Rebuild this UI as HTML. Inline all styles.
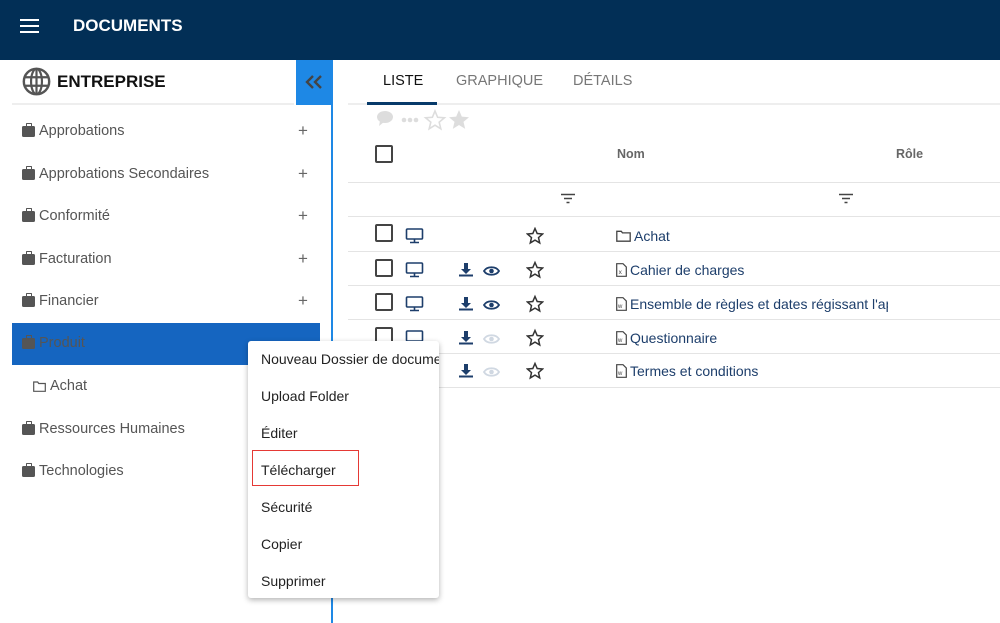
<!DOCTYPE html>
<html><head><meta charset="utf-8"><style>
*{box-sizing:border-box;margin:0;padding:0}
body{width:1000px;height:623px;overflow:hidden;background:#fff;font-family:"Liberation Sans",sans-serif;position:relative;color:#333}
.a{position:absolute}
.hdr{left:0;top:0;width:1000px;height:60px;background:#022f56}
.side .it{position:absolute;left:22px;font-size:14.5px;color:#555;display:flex;align-items:center;gap:4px}
.brief{width:13px;height:11px;background:#555;border-radius:1.5px;position:relative;margin-top:1px}
.brief:before{content:"";position:absolute;left:3.5px;top:-3px;width:4px;height:2px;border:1.5px solid #555;border-bottom:none;border-radius:1px 1px 0 0}
.plus{position:absolute;left:298px;font-size:17px;color:#666}
.cb{position:absolute;width:18px;height:18px;border:2px solid #444;border-radius:2px}
.hl{position:absolute;left:348px;width:652px;height:1px;background:#e4e4e4}
.nm{position:absolute;left:616px;font-size:14px;color:#1d3e6b;display:flex;align-items:center;gap:3px;white-space:nowrap;width:272px;overflow:hidden}
.nm svg{flex-shrink:0}
.menu{left:248px;top:341px;width:191px;height:257px;background:#fff;border-radius:3px;box-shadow:0 2px 6px rgba(0,0,0,.3);overflow:hidden}
.menu div{position:absolute;left:13px;font-size:14px;color:#222;white-space:nowrap}
</style></head><body>
<div class="a hdr"></div>
<svg class="a" style="left:20px;top:18px" width="20" height="16"><rect y="1" width="19" height="2" fill="#fff"/><rect y="7" width="19" height="2" fill="#fff"/><rect y="13" width="19" height="2" fill="#fff"/></svg>
<div class="a" style="left:73px;top:16px;color:#fff;font-weight:bold;font-size:17px">DOCUMENTS</div>

<svg class="a" style="left:22px;top:67px" width="29" height="29" viewBox="0 0 24 24"><circle cx="12" cy="12" r="10.5" fill="none" stroke="#555" stroke-width="2"/><ellipse cx="12" cy="12" rx="4.5" ry="10.5" fill="none" stroke="#555" stroke-width="1.8"/><path d="M2 8.5h20M2 15.5h20M12 1.5v21" stroke="#555" stroke-width="1.8"/></svg>
<div class="a" style="left:57px;top:72px;font-weight:bold;font-size:17px;color:#111">ENTREPRISE</div>
<div class="a" style="left:12px;top:103px;width:282px;height:2px;background:#eee"></div>
<div class="a" style="left:296px;top:60px;width:36px;height:45px;background:#1e88e5"></div>
<svg class="a" style="left:304px;top:74px" width="20" height="16"><path d="M9 2L3 8l6 6M17 2l-6 6 6 6" fill="none" stroke="#444" stroke-width="2.4"/></svg>
<div class="a" style="left:331px;top:60px;width:2px;height:563px;background:#1e88e5"></div>
<div class="a" style="left:12px;top:323px;width:308px;height:42px;background:#1565c0"></div>
<div class="side">
<div class="it" style="top:123px"><span class="brief"></span>Approbations</div><span class="plus" style="top:121px">+</span>
<div class="it" style="top:166px"><span class="brief"></span>Approbations Secondaires</div><span class="plus" style="top:164px">+</span>
<div class="it" style="top:208px"><span class="brief"></span>Conformité</div><span class="plus" style="top:206px">+</span>
<div class="it" style="top:251px"><span class="brief"></span>Facturation</div><span class="plus" style="top:249px">+</span>
<div class="it" style="top:293px"><span class="brief"></span>Financier</div><span class="plus" style="top:291px">+</span>
<div class="it" style="top:335px;color:#555"><span class="brief"></span>Produit</div>
<div class="it" style="top:378px;left:33px"><svg width="13" height="11"><path d="M.7 1h4l1 1.5h6.6v7.8H.7z" fill="none" stroke="#555" stroke-width="1.2"/></svg>Achat</div>
<div class="it" style="top:421px"><span class="brief"></span>Ressources Humaines</div>
<div class="it" style="top:463px"><span class="brief"></span>Technologies</div>
</div>

<div class="a" style="left:383px;top:73px;font-size:14.5px;color:#111">LISTE</div>
<div class="a" style="left:456px;top:73px;font-size:14.5px;color:#777">GRAPHIQUE</div>
<div class="a" style="left:573px;top:73px;font-size:14.5px;color:#777">DÉTAILS</div>
<div class="a" style="left:348px;top:103px;width:652px;height:2px;background:#eee"></div>
<div class="a" style="left:367px;top:102px;width:70px;height:3px;background:#073a6a"></div>
<svg class="a" style="left:376px;top:109px" width="96" height="24"><ellipse cx="9" cy="8" rx="8" ry="6" fill="#ddd"/><path d="M4 12l-1 5 5-4z" fill="#ddd"/><circle cx="28" cy="11" r="2.3" fill="#ddd"/><circle cx="34" cy="11" r="2.3" fill="#ddd"/><circle cx="40" cy="11" r="2.3" fill="#ddd"/><path d="M59 2l2.6 6.3 6.8.5-5.2 4.4 1.6 6.6L59 16.2l-5.8 3.6 1.6-6.6-5.2-4.4 6.8-.5z" fill="none" stroke="#ddd" stroke-width="1.6"/><path d="M83 1l2.8 6.6 7.2.6-5.5 4.7 1.7 7L83 16l-6.2 3.9 1.7-7L73 8.2l7.2-.6z" fill="#ddd"/></svg>
<div class="cb" style="left:375px;top:145px"></div>
<div class="a" style="left:617px;top:147px;font-size:12.5px;color:#666;font-weight:bold">Nom</div>
<div class="a" style="left:896px;top:147px;font-size:12.5px;color:#666;font-weight:bold">Rôle</div>
<div class="hl" style="top:182px"></div>
<svg class="a" style="left:560px;top:193px" width="16" height="12"><path d="M1 1.5h14M4 5.5h8M6.5 9.5h3" stroke="#444" stroke-width="1.6"/></svg>
<svg class="a" style="left:838px;top:193px" width="16" height="12"><path d="M1 1.5h14M4 5.5h8M6.5 9.5h3" stroke="#444" stroke-width="1.6"/></svg>
<div class="hl" style="top:216px"></div>
<div class="hl" style="top:251px"></div>
<div class="hl" style="top:285px"></div>
<div class="hl" style="top:319px"></div>
<div class="hl" style="top:353px"></div>
<div class="hl" style="top:387px"></div>

<div class="cb" style="left:375px;top:224px"></div>
<div class="cb" style="left:375px;top:259px"></div>
<div class="cb" style="left:375px;top:293px"></div>
<div class="cb" style="left:375px;top:327px"></div>
<svg class="a" style="left:405px;top:228px" width="20" height="130">
<g fill="none" stroke="#1d3e6b" stroke-width="1.6"><rect x="1.5" y="1" width="16" height="10" rx="1"/><path d="M9.5 11v3M5 14.5h9"/>
<g transform="translate(0,34)"><rect x="1.5" y="1" width="16" height="10" rx="1"/><path d="M9.5 11v3M5 14.5h9"/></g>
<g transform="translate(0,68)"><rect x="1.5" y="1" width="16" height="10" rx="1"/><path d="M9.5 11v3M5 14.5h9"/></g>
<g transform="translate(0,102)"><rect x="1.5" y="1" width="16" height="10" rx="1"/></g></g></svg>
<svg class="a" style="left:458px;top:262px" width="44" height="120">
<g id="r"><path d="M6 1h4v6h3l-5 5-5-5h3z" fill="#1d3e6b"/><rect x="1" y="12.5" width="14" height="2" fill="#1d3e6b"/></g>
<use href="#r" y="34"/><use href="#r" y="68"/><use href="#r" y="101"/>
<g id="e"><path d="M26 9c3-5 12-5 15 0-3 5-12 5-15 0z" fill="none" stroke="#1d3e6b" stroke-width="1.8"/><circle cx="33.5" cy="9" r="2.3" fill="#1d3e6b"/></g>
<use href="#e" y="34"/>
<g fill="none" stroke="#d0d8e2" stroke-width="1.8"><path d="M26 77c3-5 12-5 15 0-3 5-12 5-15 0z"/><path d="M26 110c3-5 12-5 15 0-3 5-12 5-15 0z"/></g>
<circle cx="33.5" cy="77" r="2.3" fill="#d0d8e2"/><circle cx="33.5" cy="110" r="2.3" fill="#d0d8e2"/></svg>
<svg class="a" style="left:526px;top:227px" width="18" height="160">
<g id="s"><path d="M9 1.5l2.2 5 5.4.5-4.1 3.6 1.2 5.3L9 13.1l-4.7 2.8 1.2-5.3L1.4 7l5.4-.5z" fill="none" stroke="#333" stroke-width="1.5"/></g>
<use href="#s" y="34"/><use href="#s" y="68"/><use href="#s" y="102"/><use href="#s" y="135"/></svg>
<div class="nm" style="top:228px"><svg width="15" height="12"><path d="M.8 1.3h4.5l1.2 1.6h7.7v8.3H.8z" fill="none" stroke="#444" stroke-width="1.3"/></svg>Achat</div>
<div class="nm" style="top:262px"><svg width="11" height="14"><path d="M.7.7h6.3l3.3 3.3v9.3H.7z" fill="none" stroke="#444" stroke-width="1.2"/><text x="2.6" y="11" font-size="6.5" fill="#444" font-family="Liberation Sans">x</text></svg>Cahier de charges</div>
<div class="nm" style="top:296px"><svg width="11" height="14"><path d="M.7.7h6.3l3.3 3.3v9.3H.7z" fill="none" stroke="#444" stroke-width="1.2"/><text x="2" y="11" font-size="6" fill="#444" font-family="Liberation Sans">w</text></svg>Ensemble de règles et dates régissant l'app</div>
<div class="nm" style="top:330px"><svg width="11" height="14"><path d="M.7.7h6.3l3.3 3.3v9.3H.7z" fill="none" stroke="#444" stroke-width="1.2"/><text x="2" y="11" font-size="6" fill="#444" font-family="Liberation Sans">w</text></svg>Questionnaire</div>
<div class="nm" style="top:363px"><svg width="11" height="14"><path d="M.7.7h6.3l3.3 3.3v9.3H.7z" fill="none" stroke="#444" stroke-width="1.2"/><text x="2" y="11" font-size="6" fill="#444" font-family="Liberation Sans">w</text></svg>Termes et conditions</div>

<div class="a menu">
<div style="top:10px">Nouveau Dossier de documents</div>
<div style="top:47px">Upload Folder</div>
<div style="top:84px">Éditer</div>
<div style="top:121px">Télécharger</div>
<div style="top:158px">Sécurité</div>
<div style="top:195px">Copier</div>
<div style="top:232px">Supprimer</div>
</div>
<div class="a" style="left:252px;top:450px;width:107px;height:36px;border:1.5px solid #e53935"></div>
</body></html>
